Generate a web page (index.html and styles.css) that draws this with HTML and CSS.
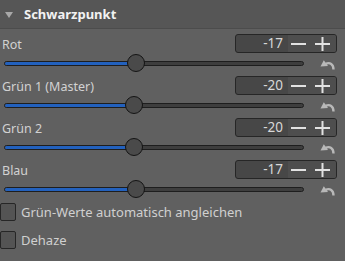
FILE: index.html
```html
<!DOCTYPE html>
<html lang="de">
<head>
    <meta charset="utf-8" />
    <title>Schwarzpunkt</title>
    <link rel="stylesheet" href="styles.css">
</head>
<body>
    <div class="panel">
        <div class="head">
            <svg class="arrow" width="8" height="6" viewBox="0 0 8 6"><polygon points="0,0 8,0 4,6" /></svg>
            <span class="title">Schwarzpunkt</span>
        </div>

        <div class="adjusters">
            <div class="adjuster">
                <div class="top">
                    <span class="label">Rot</span>
                    <div class="spin">
                        <span class="val">-17</span>
                        <span class="btns">
                            <svg width="15" height="14" viewBox="0 0 15 14"><rect x="0" y="6" width="15" height="2" /></svg>
                            <svg width="15" height="14" viewBox="0 0 15 14"><rect x="0" y="6" width="15" height="2" /><rect x="6.5" y="0" width="2" height="14" /></svg>
                        </span>
                    </div>
                </div>
                <div class="bottom">
                    <div class="track"><div class="fill" style="width: 131px"><span class="knob"></span></div></div>
                    <svg class="reset" width="15" height="11" viewBox="0 0 15 11"><path d="M13.5 10.5 C13.5 5 10 3 5.5 4.8" /><polygon points="0.5,7.5 3.8,1.2 8,7" /></svg>
                </div>
            </div>

            <div class="adjuster">
                <div class="top">
                    <span class="label">Grün 1 (Master)</span>
                    <div class="spin">
                        <span class="val">-20</span>
                        <span class="btns">
                            <svg width="15" height="14" viewBox="0 0 15 14"><rect x="0" y="6" width="15" height="2" /></svg>
                            <svg width="15" height="14" viewBox="0 0 15 14"><rect x="0" y="6" width="15" height="2" /><rect x="6.5" y="0" width="2" height="14" /></svg>
                        </span>
                    </div>
                </div>
                <div class="bottom">
                    <div class="track"><div class="fill" style="width: 129px"><span class="knob"></span></div></div>
                    <svg class="reset" width="15" height="11" viewBox="0 0 15 11"><path d="M13.5 10.5 C13.5 5 10 3 5.5 4.8" /><polygon points="0.5,7.5 3.8,1.2 8,7" /></svg>
                </div>
            </div>

            <div class="adjuster">
                <div class="top">
                    <span class="label">Grün 2</span>
                    <div class="spin">
                        <span class="val">-20</span>
                        <span class="btns">
                            <svg width="15" height="14" viewBox="0 0 15 14"><rect x="0" y="6" width="15" height="2" /></svg>
                            <svg width="15" height="14" viewBox="0 0 15 14"><rect x="0" y="6" width="15" height="2" /><rect x="6.5" y="0" width="2" height="14" /></svg>
                        </span>
                    </div>
                </div>
                <div class="bottom">
                    <div class="track"><div class="fill" style="width: 129px"><span class="knob"></span></div></div>
                    <svg class="reset" width="15" height="11" viewBox="0 0 15 11"><path d="M13.5 10.5 C13.5 5 10 3 5.5 4.8" /><polygon points="0.5,7.5 3.8,1.2 8,7" /></svg>
                </div>
            </div>

            <div class="adjuster">
                <div class="top">
                    <span class="label">Blau</span>
                    <div class="spin">
                        <span class="val">-17</span>
                        <span class="btns">
                            <svg width="15" height="14" viewBox="0 0 15 14"><rect x="0" y="6" width="15" height="2" /></svg>
                            <svg width="15" height="14" viewBox="0 0 15 14"><rect x="0" y="6" width="15" height="2" /><rect x="6.5" y="0" width="2" height="14" /></svg>
                        </span>
                    </div>
                </div>
                <div class="bottom">
                    <div class="track"><div class="fill" style="width: 131px"><span class="knob"></span></div></div>
                    <svg class="reset" width="15" height="11" viewBox="0 0 15 11"><path d="M13.5 10.5 C13.5 5 10 3 5.5 4.8" /><polygon points="0.5,7.5 3.8,1.2 8,7" /></svg>
                </div>
            </div>
        </div>

        <label class="check"><span class="box"></span>Grün-Werte automatisch angleichen</label>
        <label class="check"><span class="box"></span>Dehaze</label>
    </div>
</body>
</html>
```

FILE: styles.css
```css
body {
    margin: 0;
    background: #606060;
    font-family: "Noto Sans", "DejaVu Sans", sans-serif;
    font-size: 13px;
    color: #d2d2d2;
}

.panel {
    width: 345px;
    height: 261px;
    overflow: hidden
}

.head {
    height: 28px;
    display: flex;
    align-items: center;
    gap: 11px;
    padding-left: 5px;
    background: #565656;
    border-bottom: 1px solid #4c4c4c;
}
.head .arrow { fill: #a8a8a8; margin-top: 1px }
.head .title { font-weight: 700; color: #f2f2f2; font-size: 13px }

.adjusters { padding-top: 5px }

.adjuster {
    height: 42px;
    display: flex;
    flex-direction: column;
}

.top {
    display: flex;
    align-items: center;
    justify-content: space-between;
    height: 19px;
    padding: 0 8px 0 2px;
}
.label { font-size: 12.5px; padding-top: 1px }

.spin {
    width: 100px;
    height: 17px;
    border: 1px solid #262626;
    border-radius: 3px;
    display: flex;
    overflow: hidden;
    background: #474747;
}
.spin .val {
    flex: 1;
    text-align: right;
    line-height: 17px;
    padding-right: 5px;
    color: #d8d8d8;
    font-size: 13.5px;
}
.spin .btns {
    display: flex;
    align-items: center;
    gap: 9px;
    padding: 0 6px 0 3px;
    background: #4e4e4e;
}
.spin svg { fill: #e2e2e2; display: block }

.bottom {
    height: 20px;
    display: flex;
    align-items: center;
}

.track {
    width: 298px;
    height: 3px;
    margin-left: 4px;
    border: 1px solid #1e1e1e;
    border-radius: 3px;
    background: #3e3e3e;
}
.fill {
    height: 3px;
    background: #2361bd;
    border-radius: 2px 0 0 2px;
    position: relative;
}
.knob {
    position: absolute;
    right: -9px;
    top: -8px;
    width: 18px;
    height: 18px;
    border: 1px solid #141414;
    border-radius: 50%;
    background: #4a4a4a;
    box-sizing: border-box;
}

.reset { margin-left: 16px; margin-top: 2px }
.reset path { fill: none; stroke: #b8b8b8; stroke-width: 2.4 }
.reset polygon { fill: #b8b8b8 }

.check {
    display: flex;
    align-items: center;
    gap: 5px;
    height: 18px;
    margin-top: 1px;
    margin-bottom: 10px;
    color: #d0d0d0;
    font-size: 13px;
}
.check .box {
    width: 14px;
    height: 16px;
    border: 1px solid #262626;
    border-radius: 2px;
    background: #545454;
}
```
